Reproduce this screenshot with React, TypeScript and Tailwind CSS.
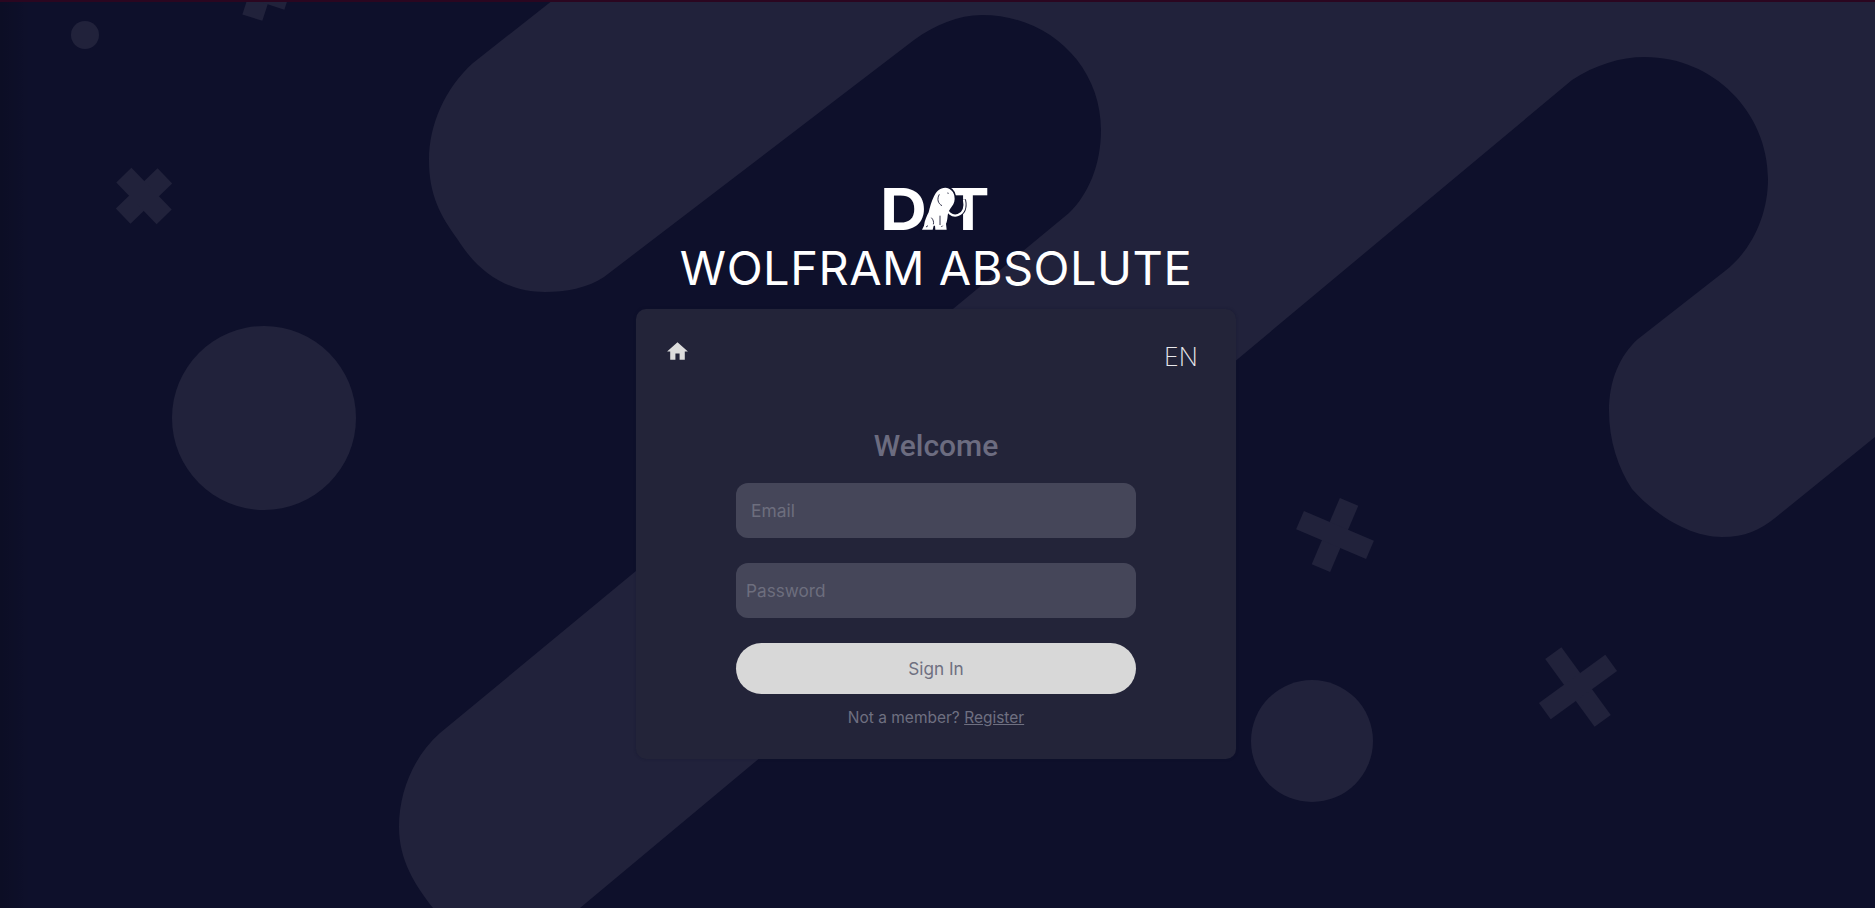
import React from "react";
import { MdHome } from "react-icons/md";

const LIGHT = "#21223b";
const BG = "#0e102b";
const BODY =
  "M18,140 L24,128 C26,112 32,100 38,88 C42,72 46,56 54,40 C60,26 72,14 88,14 C102,15 112,24 115,38 C118,52 114,62 108,70 C100,80 96,88 95,98 C94,108 93,116 90,122 L92,140 L58,140 L57,128 L53,128 L50,140 Z";
const TUSK = "M88,62 C90,90 110,102 126,96 C142,90 149,75 144,50";

function Cross({ x, y, w, h, t, r }: { x: number; y: number; w: number; h: number; t: number; r: number }) {
  return (
    <g transform={`translate(${x} ${y}) rotate(${r})`} fill={LIGHT}>
      <rect x={-t / 2} y={-h / 2} width={t} height={h} />
      <rect x={-w / 2} y={-t / 2} width={w} height={t} />
    </g>
  );
}

function Background() {
  return (
    <svg className="absolute inset-0 w-full h-full" viewBox="0 0 1875 908" aria-hidden="true">
      <path
        fill={LIGHT}
        d="M553,0 L473,63 C445,88 429,125 429,160 C429,195 440,215 458,240 C480,275 510,292 545,292 C565,292 588,288 604,277 L914,40 C935,25 958,15 982,15 C1048,15 1101,65 1101,130 C1101,165 1088,195 1069,213 L440,733 C415,755 399,790 399,827 C399,860 415,885 433,908 L580,908 L1572,80 C1595,65 1620,57 1645,57 C1713,57 1768,112 1768,179 C1768,215 1752,250 1725,271 L1638,339 C1620,355 1609,380 1609,411 C1609,440 1618,468 1632,489 C1655,515 1690,537 1722,537 C1745,537 1760,530 1775,518 L1875,437 L1875,0 Z"
      />
      <circle cx="264" cy="418" r="92" fill={LIGHT} />
      <circle cx="85" cy="35" r="14" fill={LIGHT} />
      <circle cx="1312" cy="741" r="61" fill={LIGHT} />
      <Cross x={144} y={196} w={58} h={58} t={21} r={46} />
      <Cross x={261} y={-9} w={56} h={56} t={21} r={18} />
      <Cross x={1335} y={535} w={76} h={72} t={20} r={23} />
      <Cross x={1578} y={687} w={82} h={84} t={20} r={-36} />
    </svg>
  );
}

function Logo() {
  return (
    <div className="relative flex justify-between w-[104px] h-[42px] text-white font-bold text-[58px] leading-[42px] font-['Inter',sans-serif]">
      <span className="inline-block -ml-[4px] origin-left scale-x-[1.12]">D</span>
      <span className="inline-block -mr-[2px] origin-right scale-x-[1.12]">T</span>
      <svg className="absolute left-[32px] top-[-5px] w-[60px] h-[50px]" viewBox="0 0 180 150" aria-hidden="true">
        <path d={BODY} fill={BG} stroke={BG} strokeWidth="9" />
        <path d={TUSK} fill="none" stroke={BG} strokeWidth="12" />
        <path d={BODY} fill="#fff" />
        <path d={TUSK} fill="none" stroke="#fff" strokeWidth="6.5" />
        <path
          d="M70,34 C62,48 66,62 78,68 M94,30 L98,31 M46,104 C52,110 54,118 52,124 M72,98 L72,126 M30,132 L36,128 M76,132 L80,128"
          fill="none"
          stroke={BG}
          strokeWidth="2.5"
        />
      </svg>
    </div>
  );
}

export default function App() {
  return (
    <div className="relative w-full h-[908px] overflow-hidden bg-[#0e102b] font-['Inter',sans-serif]">
      <Background />
      <div className="absolute inset-y-0 left-0 w-[30px] bg-gradient-to-r from-black/15 to-transparent" />
      <div className="absolute inset-x-0 top-0 h-[2px] bg-[#2b0620]" />

      <main className="relative flex flex-col items-center pt-[188px] pr-[3px]">
        <Logo />
        <h1 className="mt-[12px] h-[67px] text-[47px] leading-[52px] font-normal tracking-[0.5px] text-white font-['Inter',sans-serif] whitespace-nowrap">
          WOLFRAM ABSOLUTE
        </h1>

        <section className="flex flex-col items-center w-[600px] h-[450px] rounded-[10px] bg-[#232439] shadow-[0_0_3px_rgba(14,16,43,0.35)]">
          <div className="flex justify-between items-start w-full h-[108px] pl-[29px] pr-[38px] pt-[30px]">
            <MdHome className="text-[#dcdcdc]" size={25} />
            <span className="mt-[3px] text-[25px] leading-[30px] font-extralight text-[#e8e8ec]">EN</span>
          </div>
          <h2 className="h-[66px] pt-[4px] text-[30px] leading-[50px] font-medium text-[#6c6c80] font-['Roboto',sans-serif]">
            Welcome
          </h2>
          <form className="flex flex-col items-center gap-[25px] w-[400px]">
            <input
              type="text"
              placeholder="Email"
              className="w-full h-[55px] rounded-[12px] bg-[#454659] pl-[15px] text-[17.4px] outline-none placeholder:text-[#6d6e7e]"
            />
            <input
              type="password"
              placeholder="Password"
              className="w-full h-[55px] rounded-[12px] bg-[#454659] pl-[10px] text-[17.2px] outline-none placeholder:text-[#6d6e7e]"
            />
            <button type="button" className="w-full h-[51px] rounded-full bg-[#d8d8d8] text-[17.2px] text-[#6f7081]">
              Sign In
            </button>
          </form>
          <p className="mt-[12px] text-[15.5px] leading-[24px] text-[#6f7081]">
            Not a member? <a className="underline">Register</a>
          </p>
        </section>
      </main>
    </div>
  );
}
